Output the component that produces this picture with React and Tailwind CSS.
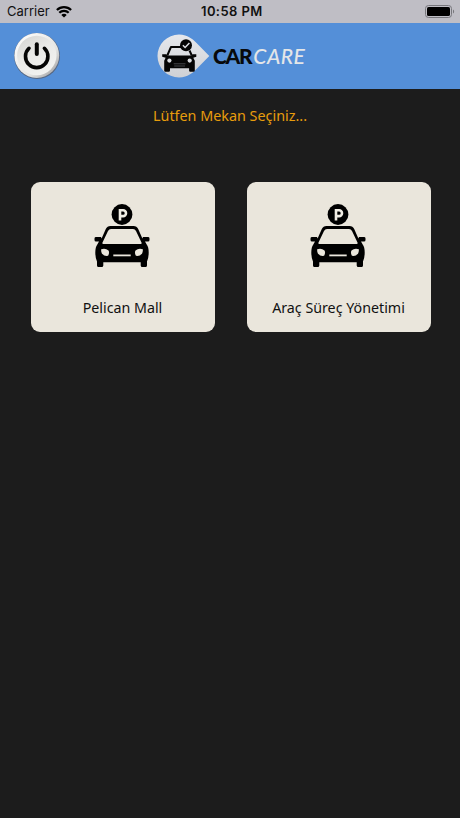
const places = [
  { id: 1, name: "Pelican Mall" },
  { id: 2, name: "Araç Süreç Yönetimi" },
];

function WifiIcon() {
  return (
    <svg width="16" height="12" viewBox="0 0 16 12" fill="none" stroke="#000" strokeWidth="2.2">
      <path d="M0.9 4.1a10 10 0 0 1 14.2 0" />
      <path d="M3.3 6.8a6.5 6.5 0 0 1 9.4 0" />
      <path d="M8 11.6L5.3 9a3.7 3.7 0 0 1 5.4 0z" fill="#000" stroke="none" />
    </svg>
  );
}

function BatteryIcon() {
  return (
    <svg width="30" height="13" viewBox="0 0 30 13">
      <rect x="0.5" y="0.5" width="26" height="12" rx="3" fill="none" stroke="#77777c" />
      <rect x="2" y="2" width="23" height="9" rx="1.6" fill="#000" />
      <path d="M28 4.5c1.5.6 1.5 3.4 0 4z" fill="#77777c" />
    </svg>
  );
}

function StatusBar() {
  return (
    <div className="relative flex h-[23px] items-center justify-between bg-[#bfbec5] pl-[7px] pr-[5px] font-['Inter',sans-serif] text-[13px] text-[#111]">
      <div className="flex items-center gap-[6px]">
        <span className="pt-px">Carrier</span>
        <WifiIcon />
      </div>
      <span className="absolute left-[201px] pt-px font-semibold tracking-[0.4px]">10:58 PM</span>
      <BatteryIcon />
    </div>
  );
}

function PowerButton() {
  return (
    <button type="button" className="ml-[13px] h-[48px] w-[48px]">
      <svg width="48" height="48" viewBox="0 0 48 48" fill="none">
        <defs>
          <linearGradient id="rim" x1="0" y1="0" x2="1" y2="1">
            <stop offset="0" stopColor="#ffffff" />
            <stop offset="0.65" stopColor="#e4e4e2" />
            <stop offset="1" stopColor="#8d8d90" />
          </linearGradient>
          <linearGradient id="face" x1="0" y1="0" x2="0.6" y2="1">
            <stop offset="0" stopColor="#d3d3d1" />
            <stop offset="0.5" stopColor="#e9e9e7" />
            <stop offset="1" stopColor="#f2f2f0" />
          </linearGradient>
        </defs>
        <circle cx="24" cy="24" r="23" fill="#566782" />
        <circle cx="23.8" cy="23.5" r="22.4" fill="url(#rim)" />
        <circle cx="23.8" cy="23.5" r="19.7" fill="url(#face)" />
        <path d="M16 16.3a11.2 11.2 0 1 0 15.4 0" stroke="#050505" strokeWidth="3.6" strokeLinecap="round" />
        <path d="M23.8 12.3v9.6" stroke="#050505" strokeWidth="4" strokeLinecap="round" />
      </svg>
    </button>
  );
}

function LogoMark() {
  return (
    <svg width="53" height="44" viewBox="0 0 53 44">
      <defs>
        <linearGradient id="pin" x1="0" y1="0" x2="0" y2="1">
          <stop offset="0" stopColor="#e6e8ec" />
          <stop offset="1" stopColor="#cfd1d5" />
        </linearGradient>
      </defs>
      <path d="M22 0.5A21.5 21.5 0 1 0 22 43.5C31 43.5 37 38 42 32.5L52.3 22L42 11.5C37 6 31 0.5 22 0.5Z" fill="url(#pin)" />
      <path d="M24.5 12.9H14L10.3 21.5M32.5 16.5L34.8 21.5" fill="none" stroke="#050505" strokeWidth="2" strokeLinejoin="round" />
      <path d="M5.2 20.2h4l1.2 1.2h24l1.4-1.2h3.5v2.6l-3 .9 1.5 3v9.8q0 1.2-1.2 1.2h-3.3q-1.2 0-1.2-1.2v-2.2H13v2.2q0 1.2-1.2 1.2H8.4q-1.2 0-1.2-1.2v-9.8l1.4-3-3.4-.9z" fill="#050505" />
      <circle cx="12.4" cy="26.6" r="2.1" fill="#d9dbdf" />
      <circle cx="32.7" cy="26.6" r="2.1" fill="#d9dbdf" />
      <path d="M16.7 29.8h11.8M17.2 32h10.8" stroke="#70747a" strokeWidth="0.6" />
      <circle cx="29" cy="11.3" r="6" fill="#050505" />
      <path d="M25.9 11.3l2.2 2.2 4.3-4.5" fill="none" stroke="#dcdee2" strokeWidth="1.5" />
    </svg>
  );
}

function Header() {
  return (
    <header className="flex h-[66px] items-center bg-[#548fd8]">
      <PowerButton />
      <div className="ml-[96px] flex items-center">
        <LogoMark />
        <div className="ml-[3px] flex whitespace-nowrap pb-[2px] font-['Lato',sans-serif] text-[21px] leading-none">
          <span className="font-black tracking-[-1.3px] text-[#08090b]">CAR</span>
          <span className="ml-[2px] font-medium italic tracking-[0.5px] text-[#e4e6e8]">CARE</span>
        </div>
      </div>
    </header>
  );
}

function ParkingIcon() {
  return (
    <svg width="56" height="64" viewBox="0 0 56 64">
      <circle cx="28" cy="10.5" r="10.4" fill="#000" />
      <path d="M26 16.4V6.3h3.1a2.9 2.9 0 0 1 0 5.8H26" fill="none" stroke="#f1eee5" strokeWidth="2.6" />
      <path
        fillRule="evenodd"
        fill="#000"
        d="M16.5 22.1H39.5Q42.8 22.1 44.2 25L48.4 34.4L49 33.1H54Q55.5 33.1 55.5 34.4V36Q55.5 37.5 54 37.5H51L52.7 40.4Q54.7 43 54.7 48.5Q54.7 54 53 57.5V61.4Q53 63 51.4 63H48.3Q46.7 63 46.7 61.4V58.3H9.3V61.4Q9.3 63 7.7 63H4.6Q3 63 3 61.4V57.5Q1.3 54 1.3 48.5Q1.3 43 3.3 40.4L5 37.5H2Q0.5 37.5 0.5 36V34.4Q0.5 33.1 2 33.1H7L7.6 34.4L11.8 25Q13.2 22.1 16.5 22.1ZM17 25Q15 25 14 27L8.4 38.8Q8 40 9.4 40H46.6Q48 40 47.6 38.8L42 27Q41 25 39 25Z"
      />
      <path d="M7.2 45.2Q11.5 43.7 14.5 46.6Q15.8 49 14 51.8Q10.2 52.4 8 49.8Q6.9 47.7 7.2 45.2Z" fill="#ebe7dd" />
      <path d="M48.8 45.2Q44.5 43.7 41.5 46.6Q40.2 49 42 51.8Q45.8 52.4 48 49.8Q49.1 47.7 48.8 45.2Z" fill="#ebe7dd" />
      <path d="M19.3 51.4H36.7" stroke="#ebe7dd" strokeWidth="1.8" />
    </svg>
  );
}

function PlaceCard({ place }) {
  return (
    <button
      type="button"
      className="flex h-[150px] w-[184px] flex-col items-center rounded-[9px] bg-[#eae6dc] pt-[22px]"
    >
      <div className="-ml-[2px]">
        <ParkingIcon />
      </div>
      <span className="-ml-px mt-[30px] text-[14.25px] leading-[20px] text-[#111]">{place.name}</span>
    </button>
  );
}

function App() {
  return (
    <div className="h-[818px] w-[460px] overflow-hidden bg-[#1c1c1c] font-['Noto_Sans',sans-serif]">
      <StatusBar />
      <Header />
      <p className="pt-[17px] text-center text-[14.35px] leading-[20px] text-[#e89c0c]">Lütfen Mekan Seçiniz...</p>
      <div className="mt-[56px] ml-[31px] flex gap-[32px]">
        {places.map((place) => (
          <PlaceCard key={place.id} place={place} />
        ))}
      </div>
    </div>
  );
}

export default App;
